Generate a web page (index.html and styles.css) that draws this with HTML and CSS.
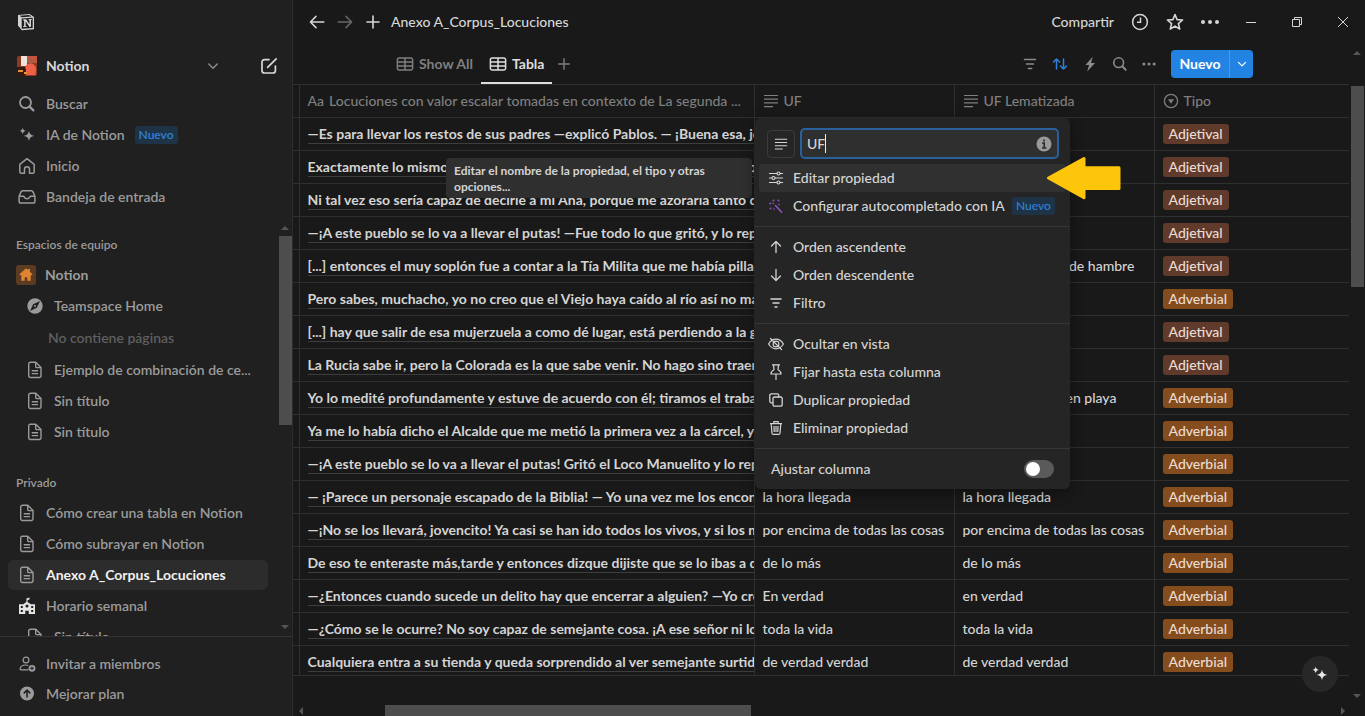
FILE: index.html
```html
<!DOCTYPE html>
<html lang="es">
<head>
<meta charset="utf-8">
<title>Anexo A_Corpus_Locuciones</title>
<link rel="stylesheet" href="styles.css">
</head>
<body>
<svg class="sprite" aria-hidden="true">
  <symbol id="i-search" viewBox="0 0 18 18"><g fill="none" stroke="currentColor" stroke-linecap="round"><circle cx="7.500" cy="7.500" r="5.500" stroke-width="1.800"/><path d="M11.600 11.600 15.400 15.400" stroke-width="2.200"/></g></symbol>
  <symbol id="i-sparkle" viewBox="0 0 18 18"><path fill="currentColor" d="M11 4.600c.6 3.400 1.900 4.700 5.200 5.300-3.300.6-4.600 1.900-5.200 5.300-.6-3.400-1.900-4.700-5.200-5.300 3.300-.6 4.600-1.900 5.200-5.300zM4.700 1.500c.4 2.200 1.100 3 3.300 3.400-2.200.4-2.900 1.100-3.300 3.300C4.300 6 3.600 5.300 1.400 4.900 3.600 4.500 4.300 3.700 4.700 1.500z"/></symbol>
  <symbol id="i-home" viewBox="0 0 18 18"><path fill="none" stroke="currentColor" stroke-width="1.500" stroke-linejoin="round" d="M1.800 7.300 9 1.700l7.200 5.600v7.400a1.500 1.500 0 0 1-1.500 1.500h-3.200v-4a2.500 2.500 0 0 0-5 0v4H3.300a1.500 1.500 0 0 1-1.500-1.500z"/></symbol>
  <symbol id="i-inbox" viewBox="0 0 18 18"><path fill="none" stroke="currentColor" stroke-width="1.500" stroke-linejoin="round" d="M1.100 8.300 3 3.900c.3-.7.900-1.100 1.700-1.100h8.600c.8 0 1.400.4 1.700 1.100l1.900 4.400v5a1.800 1.800 0 0 1-1.800 1.800H2.900a1.800 1.800 0 0 1-1.800-1.800zM1.100 8.300h4.200c.6 0 .8.4 1 .8.600 1.200 1.500 1.700 2.700 1.700s2.100-.5 2.700-1.700c.2-.4.400-.8 1-.8h4.200"/></symbol>
  <symbol id="i-page" viewBox="0 0 18 18"><path fill="none" stroke="currentColor" stroke-width="1.400" stroke-linejoin="round" d="M4.500 1.200h5.300l5.200 5.300v8.200a1.800 1.800 0 0 1-1.800 1.800H4.500a1.800 1.800 0 0 1-1.800-1.800V3A1.800 1.800 0 0 1 4.500 1.200zM9.700 1.400v4a1.200 1.200 0 0 0 1.200 1.200h3.900M5.700 9.800h6.400M5.700 12.600h6.400"/></symbol>
  <symbol id="i-table" viewBox="0 0 18 18"><path fill="none" stroke="currentColor" stroke-width="1.500" d="M3.200 3h11.600a1.800 1.800 0 0 1 1.800 1.800v8.400a1.800 1.800 0 0 1-1.800 1.800H3.200a1.800 1.800 0 0 1-1.800-1.800V4.800A1.800 1.800 0 0 1 3.200 3zM1.400 7h15.200M1.400 11h15.200M9 3v12"/></symbol>
  <symbol id="i-filter" viewBox="0 0 16 16"><path fill="none" stroke="currentColor" stroke-width="1.500" stroke-linecap="round" d="M2.500 3.500h11M4.500 8h7M6.300 12.500h3.400"/></symbol>
  <symbol id="i-lines" viewBox="0 0 16 16"><path fill="none" stroke="currentColor" stroke-width="1.200" d="M1 2.500h14M1 6.200h14M1 9.900h14M1 13.600h9"/></symbol>
  <symbol id="i-plus" viewBox="0 0 16 16"><path fill="none" stroke="currentColor" stroke-width="1.600" stroke-linecap="round" d="M8 2v12M2 8h12"/></symbol>
  <symbol id="i-arrow" viewBox="0 0 16 16"><path fill="none" stroke="currentColor" stroke-width="1.500" stroke-linecap="round" stroke-linejoin="round" d="M14.800 8H1.400M7 2.400 1.400 8 7 13.600"/></symbol>
  <symbol id="i-up" viewBox="0 0 16 16"><path fill="none" stroke="currentColor" stroke-width="1.300" stroke-linecap="round" stroke-linejoin="round" d="M8 13.500v-11M3.500 7 8 2.500 12.500 7"/></symbol>
  <symbol id="i-chevron" viewBox="0 0 12 12"><path fill="none" stroke="currentColor" stroke-width="1.500" stroke-linecap="round" stroke-linejoin="round" d="M1.800 4 6 8.200 10.200 4"/></symbol>
</svg>

<div class="app">
  <aside class="sidebar">
    <div class="brand">
      <svg class="logo" viewBox="0 0 18 18"><path fill="#d2d2d2" d="M1 2 12.500 1 17 4v12.200L4.800 17.200 1 12.600z"/><path fill="#202020" d="M2.600 2.700 12 2l2.600 1.600-9.800.7zM4.700 5.600l11-.8v10.200l-11 .8z"/><path fill="#e6e6e6" d="M6 6.500 9 6.300l3.500 5.300V7.200l-1-.2v-.7l3.300-.2v.7l-.9.3v6.700l-1.300.1-4-6v5l1.100.2v.7l-3.500.2v-.7l1-.3V7.400L6 7.200z"/></svg>
    </div>
    <div class="workspace">
      <button class="workspace-btn" type="button">
        <svg class="avatar" viewBox="0 0 20 20"><rect width="20" height="20" rx="2" fill="#8c3a22"/><path fill="#eee3dc" d="M4 0h6v10H4z"/><path fill="#c5543a" d="M10 0h10v7H10z"/><circle cx="13.500" cy="4.800" r="3" fill="#a85b45"/><path fill="#ef6048" d="M8 12c1-4 4-4.500 6-4.500s5 2 5 6l-.5 5.500H10z"/><path fill="#3a1710" d="M0 11h8l1 3-1 6H0z"/><path fill="#e3943b" d="M1 14h5v2H1zM7 16h3v2H7z"/></svg>
        <span class="workspace-name">Notion</span>
        <svg class="chev"><use href="#i-chevron"/></svg>
      </button>
      <button class="icon-btn" type="button" aria-label="Nueva página"><svg class="ic18" viewBox="0 0 18 18"><path fill="none" stroke="currentColor" stroke-width="1.700" stroke-linecap="round" d="M9 2.600H4.500a2.500 2.500 0 0 0-2.500 2.500v8.400A2.500 2.500 0 0 0 4.500 16h8.400a2.500 2.500 0 0 0 2.500-2.500V9M7.600 10.400l8.600-8.600"/></svg></button>
    </div>
    <nav class="side-nav">
      <a href="#" class="item"><svg class="ic18"><use href="#i-search"/></svg>Buscar</a>
      <a href="#" class="item"><svg class="ic18"><use href="#i-sparkle"/></svg>IA de Notion <span class="badge">Nuevo</span></a>
      <a href="#" class="item"><svg class="ic18"><use href="#i-home"/></svg>Inicio</a>
      <a href="#" class="item"><svg class="ic18"><use href="#i-inbox"/></svg>Bandeja de entrada</a>
    </nav>
    <div class="side-scroll">
      <div class="side-list">
        <h2 class="section">Espacios de equipo</h2>
        <a href="#" class="item team"><svg class="team-icon" viewBox="0 0 20 20"><rect width="20" height="20" rx="3" fill="#5c3b23"/><path fill="#e08434" d="M10 3.300 11.900 5V4h2v2.800L16.500 9.200l-.8 1.200-1-.6v6h-3.400v-3.600H8.700v3.600H5.300v-6l-1 .6-.8-1.200z"/></svg>Notion</a>
        <a href="#" class="item sub"><svg class="ic18" viewBox="0 0 18 18"><circle cx="9" cy="9" r="7.700" fill="currentColor"/><path fill="#202020" fill-rule="evenodd" d="m14 4-3.200 6.800L4 14l3.200-6.800zM9 8a1 1 0 1 0 0 2 1 1 0 0 0 0-2z"/></svg>Teamspace Home</a>
        <p class="empty">No contiene páginas</p>
        <a href="#" class="item sub"><svg class="ic18"><use href="#i-page"/></svg><span>Ejemplo de combinación de ce...</span></a>
        <a href="#" class="item sub"><svg class="ic18"><use href="#i-page"/></svg>Sin título</a>
        <a href="#" class="item sub"><svg class="ic18"><use href="#i-page"/></svg>Sin título</a>
        <h2 class="section private">Privado</h2>
        <a href="#" class="item"><svg class="ic18"><use href="#i-page"/></svg>Cómo crear una tabla en Notion</a>
        <a href="#" class="item"><svg class="ic18"><use href="#i-page"/></svg>Cómo subrayar en Notion</a>
        <a href="#" class="item active"><svg class="ic18"><use href="#i-page"/></svg>Anexo A_Corpus_Locuciones</a>
        <a href="#" class="item"><svg class="ic18 school" viewBox="0 0 18 18"><path fill="currentColor" fill-rule="evenodd" d="M8.400 1.500 11.500.5v2L9.500 3v2l3.300 2.300H17V17h-6.300v-3.300H7.300V17H1V7.300h4.200L8.400 5zM2.800 9v2h2V9zm0 4v2h2v-2zm10.400-4v2h2V9zm0 4v2h2v-2zM9 7.500A1.500 1.500 0 1 0 9 10.500 1.500 1.500 0 0 0 9 7.500z"/></svg>Horario semanal</a>
        <a href="#" class="item sub"><svg class="ic18"><use href="#i-page"/></svg>Sin título</a>
      </div>
      <div class="rail"><i class="tri up"></i><i class="thumb side-thumb"></i><i class="tri down"></i></div>
    </div>
    <div class="side-foot">
      <a href="#" class="item"><svg class="ic18" viewBox="0 0 18 18"><g fill="none" stroke="currentColor" stroke-width="1.200"><circle cx="8" cy="5" r="2.900"/><path d="M10.500 14.800H3c-.8 0-1.100-.5-.9-1.200C2.700 11.500 4.500 10 7.500 10c1 0 2 .2 2.800.5"/></g><circle cx="14" cy="13.300" r="3.400" fill="currentColor"/><path stroke="#202020" d="M14 11.500v3.600M12.200 13.300h3.600"/></svg>Invitar a miembros</a>
      <a href="#" class="item"><svg class="ic18" viewBox="0 0 18 18"><circle cx="9" cy="8.500" r="7" fill="currentColor"/><path fill="none" stroke="#202020" stroke-width="1.500" stroke-linecap="round" stroke-linejoin="round" d="M9 12V5.300M6.200 7.900 9 5.100l2.800 2.800"/></svg>Mejorar plan</a>
    </div>
  </aside>

  <main class="main">
    <header class="topbar">
      <button class="icon-btn" type="button" aria-label="Atrás"><svg class="ic16"><use href="#i-arrow"/></svg></button>
      <button class="icon-btn dim" type="button" aria-label="Adelante"><svg class="ic16 flip"><use href="#i-arrow"/></svg></button>
      <button class="icon-btn" type="button" aria-label="Nueva pestaña"><svg class="ic16"><use href="#i-plus"/></svg></button>
      <h1 class="page-title">Anexo A_Corpus_Locuciones</h1>
      <button class="share" type="button">Compartir</button>
      <button class="icon-btn" type="button" aria-label="Actualizaciones"><svg class="ic18" viewBox="0 0 18 18"><g fill="none" stroke="currentColor" stroke-width="1.500"><circle cx="9" cy="9" r="7.400"/><path d="M9.500 4.500V9.300H6"/></g></svg></button>
      <button class="icon-btn" type="button" aria-label="Favorito"><svg class="ic18" viewBox="0 0 18 18"><path fill="none" stroke="currentColor" stroke-width="1.600" stroke-linejoin="round" d="m9 1.500 2.100 5.100 5.500.4-4.200 3.600 1.300 5.400L9 13.100 4.300 16l1.300-5.400L1.400 7l5.500-.4z"/></svg></button>
      <button class="icon-btn" type="button" aria-label="Más"><svg class="ic18" viewBox="0 0 18 18"><g fill="currentColor"><circle cx="2" cy="9" r="2"/><circle cx="9" cy="9" r="2"/><circle cx="16" cy="9" r="2"/></g></svg></button>
      <div class="window-ctl">
        <button class="icon-btn" type="button" aria-label="Minimizar"><svg class="ic12" viewBox="0 0 12 12"><path stroke="currentColor" d="M1 6.500h10"/></svg></button>
        <button class="icon-btn" type="button" aria-label="Restaurar"><svg class="ic12" viewBox="0 0 12 12"><path fill="none" stroke="currentColor" d="M1.500 3.500h7v7h-7zM3.500 3V1.500h7v7H9"/></svg></button>
        <button class="icon-btn" type="button" aria-label="Cerrar"><svg class="ic12" viewBox="0 0 12 12"><path stroke="currentColor" d="m1 1 10 10M11 1 1 11"/></svg></button>
      </div>
    </header>

    <div class="body">
      <div class="view">
        <div class="tabs">
          <button class="tab" type="button"><svg class="ic18"><use href="#i-table"/></svg>Show All</button>
          <button class="tab current" type="button"><svg class="ic18"><use href="#i-table"/></svg>Tabla</button>
          <button class="icon-btn add-view" type="button" aria-label="Añadir vista"><svg class="ic14"><use href="#i-plus"/></svg></button>
          <div class="tools">
            <button class="icon-btn" type="button" aria-label="Filtrar"><svg class="ic16"><use href="#i-filter"/></svg></button>
            <button class="icon-btn blue" type="button" aria-label="Ordenar"><svg class="ic16" viewBox="0 0 16 16"><path fill="none" stroke="currentColor" stroke-width="1.500" stroke-linecap="round" stroke-linejoin="round" d="M4.500 13V3M1.500 6l3-3 3 3M11.500 3v10M8.500 10l3 3 3-3"/></svg></button>
            <button class="icon-btn" type="button" aria-label="Automatizaciones"><svg class="ic16" viewBox="0 0 16 16"><path fill="currentColor" d="M10.800.8 3.400 9h3.700l-1.900 6.400L13 7H9z"/></svg></button>
            <button class="icon-btn" type="button" aria-label="Buscar"><svg class="ic16"><use href="#i-search"/></svg></button>
            <button class="icon-btn" type="button" aria-label="Opciones"><svg class="ic14" viewBox="0 0 14 14"><g fill="currentColor"><circle cx="1.900" cy="7" r="1.500"/><circle cx="7" cy="7" r="1.500"/><circle cx="12.100" cy="7" r="1.500"/></g></svg></button>
          </div>
          <div class="new">
            <button class="new-main" type="button">Nuevo</button>
            <button class="new-more" type="button" aria-label="Plantillas"><svg class="ic10"><use href="#i-chevron"/></svg></button>
          </div>
        </div>
        <div class="table-wrap">
          <table class="grid">
            <colgroup><col class="c-gutter"><col class="c-title"><col class="c-text"><col class="c-text"><col></colgroup>
            <thead><tr>
              <td></td>
              <th><div class="th"><span>Aa</span><span class="ellipsis">Locuciones con valor escalar tomadas en contexto de La segunda ...</span></div></th>
              <th><div class="th"><svg class="ic16"><use href="#i-lines"/></svg>UF</div></th>
              <th><div class="th"><svg class="ic16"><use href="#i-lines"/></svg>UF Lematizada</div></th>
              <th><div class="th"><svg class="ic16" viewBox="0 0 16 16"><circle cx="8" cy="8" r="6.600" fill="none" stroke="currentColor" stroke-width="1.300"/><path fill="currentColor" d="M5 6.300h6L8 10.800z"/></svg>Tipo</div></th>
            </tr></thead>
            <tbody>
              <tr><td></td><td><span class="name">—Es para llevar los restos de sus padres —explicó Pablos. — ¡Buena esa, jovencito!</span></td><td></td><td></td><td><span class="tag adj">Adjetival</span></td></tr>
              <tr><td></td><td><span class="name">Exactamente lo mismo que había pasado la otra noche con aquel señor que vino</span></td><td></td><td></td><td><span class="tag adj">Adjetival</span></td></tr>
              <tr><td></td><td><span class="name">Ni tal vez eso sería capaz de decirle a mi Ana, porque me azoraría tanto que no</span></td><td></td><td></td><td><span class="tag adj">Adjetival</span></td></tr>
              <tr><td></td><td><span class="name">—¡A este pueblo se lo va a llevar el putas! —Fue todo lo que gritó, y lo repitió</span></td><td></td><td></td><td><span class="tag adj">Adjetival</span></td></tr>
              <tr><td></td><td><span class="name">[...] entonces el muy soplón fue a contar a la Tía Milita que me había pillado ahí</span></td><td></td><td>estaba muriendo de hambre</td><td><span class="tag adj">Adjetival</span></td></tr>
              <tr><td></td><td><span class="name">Pero sabes, muchacho, yo no creo que el Viejo haya caído al río así no más, no</span></td><td></td><td></td><td><span class="tag adv">Adverbial</span></td></tr>
              <tr><td></td><td><span class="name">[...] hay que salir de esa mujerzuela a como dé lugar, está perdiendo a la gente</span></td><td></td><td></td><td><span class="tag adj">Adjetival</span></td></tr>
              <tr><td></td><td><span class="name">La Rucia sabe ir, pero la Colorada es la que sabe venir. No hago sino traerlas</span></td><td></td><td></td><td><span class="tag adj">Adjetival</span></td></tr>
              <tr><td></td><td><span class="name">Yo lo medité profundamente y estuve de acuerdo con él; tiramos el trabajo al</span></td><td></td><td>anduve de playa en playa</td><td><span class="tag adv">Adverbial</span></td></tr>
              <tr><td></td><td><span class="name">Ya me lo había dicho el Alcalde que me metió la primera vez a la cárcel, y yo</span></td><td></td><td></td><td><span class="tag adv">Adverbial</span></td></tr>
              <tr><td></td><td><span class="name">—¡A este pueblo se lo va a llevar el putas! Gritó el Loco Manuelito y lo repitió</span></td><td></td><td></td><td><span class="tag adv">Adverbial</span></td></tr>
              <tr><td></td><td><span class="name">— ¡Parece un personaje escapado de la Biblia! — Yo una vez me los encontré</span></td><td>la hora llegada</td><td>la hora llegada</td><td><span class="tag adv">Adverbial</span></td></tr>
              <tr><td></td><td><span class="name">—¡No se los llevará, jovencito! Ya casi se han ido todos los vivos, y si los muertos</span></td><td>por encima de todas las cosas</td><td>por encima de todas las cosas</td><td><span class="tag adv">Adverbial</span></td></tr>
              <tr><td></td><td><span class="name">De eso te enteraste más,tarde y entonces dizque dijiste que se lo ibas a decir</span></td><td>de lo más</td><td>de lo más</td><td><span class="tag adv">Adverbial</span></td></tr>
              <tr><td></td><td><span class="name">—¿Entonces cuando sucede un delito hay que encerrar a alguien? —Yo creo</span></td><td>En verdad</td><td>en verdad</td><td><span class="tag adv">Adverbial</span></td></tr>
              <tr><td></td><td><span class="name">—¿Cómo se le ocurre? No soy capaz de semejante cosa. ¡A ese señor ni lo</span></td><td>toda la vida</td><td>toda la vida</td><td><span class="tag adv">Adverbial</span></td></tr>
              <tr><td></td><td><span class="name">Cualquiera entra a su tienda y queda sorprendido al ver semejante surtido</span></td><td>de verdad verdad</td><td>de verdad verdad</td><td><span class="tag adv">Adverbial</span></td></tr>
            </tbody>
          </table>
        </div>
      </div>
      <div class="rail"><i class="tri up"></i><i class="thumb main-thumb"></i><i class="tri down"></i></div>
    </div>
    <div class="hrail"><i class="tri left"></i><i class="hthumb"></i><i class="tri right"></i></div>

    <div class="tooltip" role="tooltip">Editar el nombre de la propiedad, el tipo y otras opciones...</div>

    <section class="menu" aria-label="Propiedad UF">
      <div class="menu-name">
        <button class="type-btn" type="button" aria-label="Tipo de propiedad"><svg class="ic14"><use href="#i-lines"/></svg></button>
        <label class="field">
          <input type="text" value="UF" aria-label="Nombre de la propiedad">
          <i class="caret"></i>
          <svg class="ic16" viewBox="0 0 16 16"><circle cx="8" cy="8" r="7.500" fill="#9a9a9a"/><path stroke="#2b2b2b" stroke-width="1.700" fill="none" d="M6.300 7.200H8.200V12M6 12h4.400M8 3.500v2"/></svg>
        </label>
      </div>
      <div class="group first">
        <button class="opt hover" type="button"><svg class="ic16" viewBox="0 0 16 16"><g fill="none" stroke="currentColor" stroke-width="1.200"><path d="M1 3.500h8M12 3.500h3M1 8h3M7 8h8M1 12.500h8M12 12.500h3"/><circle cx="10.500" cy="3.500" r="1.500"/><circle cx="5.500" cy="8" r="1.500"/><circle cx="10.500" cy="12.500" r="1.500"/></g></svg>Editar propiedad</button>
        <button class="opt" type="button"><svg class="ic16 purple" viewBox="0 0 16 16"><path fill="none" stroke="currentColor" stroke-width="1.600" stroke-linecap="round" d="M7.500 7.500l6.200 6.700"/><g fill="currentColor"><circle cx="5.500" cy="2.500" r="1"/><circle cx="10.500" cy="2.500" r="1"/><circle cx="2.200" cy="5.500" r="1"/><circle cx="5.200" cy="5.400" r=".8"/><circle cx="2.500" cy="10.500" r="1"/><circle cx="6" cy="11" r=".8"/><circle cx="11" cy="6.500" r=".8"/></g></svg>Configurar autocompletado con IA <span class="badge">Nuevo</span></button>
      </div>
      <div class="group">
        <button class="opt" type="button"><svg class="ic16"><use href="#i-up"/></svg>Orden ascendente</button>
        <button class="opt" type="button"><svg class="ic16 flip"><use href="#i-up"/></svg>Orden descendente</button>
        <button class="opt" type="button"><svg class="ic16" viewBox="0 0 16 16"><path fill="none" stroke="currentColor" stroke-width="1.300" d="M2.500 4h11M4.500 8h7M6.500 12h3"/></svg>Filtro</button>
      </div>
      <div class="group">
        <button class="opt" type="button"><svg class="ic16" viewBox="0 0 16 16"><g fill="none" stroke="currentColor" stroke-width="1.200" stroke-linecap="round"><path d="M.6 8C2.500 4.800 5 3.200 8 3.200s5.500 1.600 7.400 4.800C13.500 11.200 11 12.800 8 12.800S2.500 11.200.6 8z"/><circle cx="8" cy="8" r="2.900"/><path d="m2.500 2.500 11 11"/></g></svg>Ocultar en vista</button>
        <button class="opt" type="button"><svg class="ic16" viewBox="0 0 16 16"><path fill="none" stroke="currentColor" stroke-width="1.200" stroke-linejoin="round" d="M4 .9h8M5.500.9 6 5.800C4 6.800 3 8.200 2.900 10h10.200C13 8.200 12 6.800 10 5.800l.5-4.900M8 10v6"/></svg>Fijar hasta esta columna</button>
        <button class="opt" type="button"><svg class="ic16" viewBox="0 0 16 16"><path fill="none" stroke="currentColor" stroke-width="1.300" stroke-linejoin="round" d="M6.500 5h6.200a1.500 1.500 0 0 1 1.500 1.500v6.200a1.500 1.500 0 0 1-1.500 1.500H6.500A1.500 1.500 0 0 1 5 12.700V6.500A1.500 1.500 0 0 1 6.500 5zM5 10.800H3.300a1.500 1.500 0 0 1-1.500-1.500V3.300a1.500 1.500 0 0 1 1.500-1.500h6a1.500 1.500 0 0 1 1.500 1.500V5"/></svg>Duplicar propiedad</button>
        <button class="opt" type="button"><svg class="ic16" viewBox="0 0 16 16"><path fill="none" stroke="currentColor" stroke-width="1.200" stroke-linejoin="round" d="M2 3.700h12M5.800 3.500V1.600h4.400v1.900M3.200 3.900l.8 9.400c.1.800.5 1.100 1.200 1.100h5.600c.7 0 1.100-.3 1.200-1.100l.8-9.400M6 6l.2 6M8 6v6M10 6l-.2 6"/></svg>Eliminar propiedad</button>
      </div>
      <div class="group">
        <label class="wrap-row">Ajustar columna<input class="switch" type="checkbox" role="switch"></label>
      </div>
    </section>

    <svg class="pointer" viewBox="0 0 76 44" aria-hidden="true"><path fill="#fdc60b" stroke="#fdc60b" stroke-width="3" stroke-linejoin="round" d="M2.500 22 38 2.500v9.200h35v20.800H38v9.200z"/></svg>
    <button class="ai-fab" type="button" aria-label="IA de Notion"><svg class="ic18"><use href="#i-sparkle"/></svg></button>
  </main>
</div>
</body>
</html>
```
FILE: styles.css
```css
* { box-sizing: border-box; }
body {
  margin: 0;
  background: #191919;
  color: #d4d4d4;
  font: 500 14px/20px Lato, "Liberation Sans", sans-serif;
  overflow: hidden;
}
button, input { font: inherit; color: inherit; }
button { border: 0; padding: 0; background: none; }
a { color: inherit; text-decoration: none; }
h1, h2, p { margin: 0; font-size: inherit; font-weight: inherit; }
svg { display: block; flex: none; }
.sprite { position: absolute; width: 0; height: 0; }
.ic18 { width: 18px; height: 18px; }
.ic16 { width: 16px; height: 16px; }
.ic14 { width: 14px; height: 14px; }
.ic12 { width: 12px; height: 12px; }
.ic10 { width: 10px; height: 10px; }
.flip { transform: rotate(180deg); }
.ellipsis { min-width: 0; overflow: hidden; text-overflow: ellipsis; white-space: nowrap; }
.icon-btn { display: flex; align-items: center; justify-content: center; }

.app { display: flex; height: 100vh; }

/* Sidebar */
.sidebar {
  flex: none;
  display: flex;
  flex-direction: column;
  width: 293px;
  background: #202020;
  border-right: 1px solid #2c2c2c;
  color: #9b9b9b;
  font-weight: 600;
}
.brand { display: flex; align-items: center; height: 44px; padding-left: 17px; }
.logo { width: 18px; height: 18px; }
.workspace { display: flex; align-items: center; gap: 41px; height: 44px; padding: 0 14px 0 17px; color: #d8d8d8; }
.workspace-btn { flex: 1; display: flex; align-items: center; gap: 9px; text-align: left; font-weight: 700; }
.workspace-name { flex: 1; }
.avatar { width: 20px; height: 20px; }
.chev { width: 12px; height: 12px; color: #8a8a8a; }
.side-nav { display: grid; gap: 1px; padding: 1px 0; }
.item {
  display: flex;
  align-items: center;
  gap: 10px;
  height: 30px;
  margin: 0 24px 0 8px;
  padding: 0 10px;
  border-radius: 6px;
  white-space: nowrap;
}
.item.sub { padding-left: 18px; }
.item.team { height: 31px; padding-left: 8px; gap: 9px; font-weight: 700; }
.item.active { background: #2c2c2c; color: #f1f1f1; font-weight: 700; }
.item.active svg { color: #9b9b9b; }
.school { color: #e4e4e4; }
.team-icon { width: 20px; height: 20px; }
.badge {
  height: 18px;
  padding: 0 4px;
  border-radius: 3px;
  background: #1f3347;
  color: #2f81d8;
  font-size: 12px;
  line-height: 18px;
}
.side-scroll { flex: 1; min-height: 0; display: flex; margin-top: 9px; border-bottom: 1px solid #333; }
.side-list { flex: 1; min-width: 0; display: flex; flex-direction: column; gap: 1px; overflow: hidden; padding-top: 10px; }
.side-list .item { flex: none; margin-right: 10px; }
.section { flex: none; height: 26px; padding: 3px 16px; font-size: 12px; }
.private { margin: 22px 0 1px; }
.empty { flex: none; height: 32px; padding: 6px 0 0 48px; color: #5f5f5f; }
.side-foot { padding: 12px 0 7px; }

/* Scroll rails */
.rail { flex: none; display: flex; flex-direction: column; align-items: center; width: 14px; }
.tri { width: 0; height: 0; border: 4px solid transparent; }
.tri.up { border-bottom-color: #555; border-top: 0; }
.tri.down { border-top-color: #555; border-bottom: 0; margin-top: auto; }
.tri.left { border-right-color: #555; border-left: 0; }
.tri.right { border-left-color: #555; border-right: 0; margin-left: auto; }
.thumb { width: 13px; background: #4d4d4d; }
.side-scroll .rail { padding: 4px 0 7px; }
.side-thumb { height: 47%; margin-top: 6px; }
.body .rail { width: 16px; padding: 7px 0; }
.main-thumb { height: 31%; margin-top: 31px; }
.hrail { flex: none; display: flex; align-items: center; height: 11px; padding: 0 20px 0 6px; }
.hthumb { width: 35%; height: 11px; margin-left: 82px; background: #4d4d4d; }

/* Main */
.main { position: relative; flex: 1; min-width: 0; display: flex; flex-direction: column; }
.topbar { flex: none; display: flex; align-items: center; gap: 12px; height: 44px; padding: 0 16px; color: #d6d6d6; }
.dim { color: #686868; }
.page-title { flex: 1; margin-left: -2px; }
.topbar > .icon-btn:nth-of-type(n+5) { margin-left: 5px; }
.window-ctl { display: flex; gap: 34px; margin-left: 14px; }
.body { flex: 1; min-height: 0; display: flex; }
.view { flex: 1; min-width: 0; display: flex; flex-direction: column; }

.tabs { flex: none; display: flex; align-items: center; height: 40px; padding: 0 96px 0 95px; font-weight: 700; }
.tab { display: flex; align-items: center; gap: 5px; height: 40px; padding: 2px 8px 0; color: #7f7f7f; border-bottom: 2px solid transparent; }
.tab.current { color: #dedede; border-color: #dedede; }
.add-view { margin-left: 5px; color: #7f7f7f; }
.tools { display: flex; align-items: center; gap: 14px; margin-left: auto; color: #8a8a8a; }
.blue { color: #2f81d8; }
.new { display: flex; height: 28px; margin-left: 15px; border-radius: 4px; background: #2383e2; color: #fff; overflow: hidden; }
.new-main { width: 58px; }
.new-more { display: flex; align-items: center; justify-content: center; width: 24px; border-left: 1px solid #4a9aea; }

.table-wrap { flex: none; }
.grid { width: 100%; table-layout: fixed; border-collapse: collapse; border-top: 1px solid #2f2f2f; }
.c-gutter { width: 6px; }
.c-title { width: 455px; }
.c-text { width: 200px; }
.grid tr { height: 33px; border-bottom: 1px solid #2f2f2f; }
.grid tbody tr:last-child { height: 30px; }
.grid tbody tr:last-child td { padding-top: 3px; }
.grid td, .grid th { padding: 0 0 0 8px; border-left: 1px solid #2f2f2f; overflow: hidden; white-space: nowrap; text-align: left; font-weight: 500; }
.grid td:first-child { border-left: 0; padding: 0; }
.th { display: flex; align-items: center; gap: 5px; padding-right: 4px; color: #7f7f7f; }
.name { display: block; border-bottom: 1px solid #3d3d3d; line-height: 18px; font-weight: 700; }
.tag { display: block; width: fit-content; height: 20px; padding: 0 6px; border-radius: 3px; color: #ecdcd2; }
.adj { background: #603b2c; }
.adv { background: #854c1d; }

/* Overlays */
.tooltip {
  position: absolute;
  left: 153px;
  top: 158px;
  width: 306px;
  padding: 5px 8px 3px;
  border-radius: 4px;
  background: #2f2f2f;
  font-size: 12px;
  font-weight: 700;
  line-height: 16px;
}
.menu {
  position: absolute;
  left: 462px;
  top: 118px;
  width: 315px;
  border-radius: 6px;
  background: #252525;
  box-shadow: 0 4px 14px rgba(0, 0, 0, .4);
}
.menu-name { display: flex; align-items: center; gap: 5px; padding: 10px 11px 5px 12px; }
.type-btn { display: flex; align-items: center; justify-content: center; width: 28px; height: 28px; border: 1px solid #3b3b3b; border-radius: 4px; }
.field { position: relative; flex: 1; display: flex; align-items: center; height: 31px; padding: 0 5px; border: 2px solid #28619d; border-radius: 5px; background: #2f2f2f; }
.field input { flex: 1; min-width: 0; padding: 0; border: 0; outline: 0; background: none; }
.caret { position: absolute; left: 23px; top: 4px; width: 1px; height: 19px; background: #eee; }
.group { padding: 6px 4px; border-top: 1px solid #363636; }
.group.first { padding-top: 0; border-top: 0; }
.opt { display: flex; align-items: center; gap: 9px; width: 100%; height: 28px; padding: 0 9px; border-radius: 4px; white-space: nowrap; }
.opt.hover { background: #303030; }
.opt .badge { margin-left: -2px; }
.purple { color: #8b55c4; }
.wrap-row { display: flex; align-items: center; justify-content: space-between; height: 28px; padding: 0 12px; }
.switch { appearance: none; width: 30px; height: 18px; margin: 0; padding: 2px; border-radius: 9px; background: #5a5a5a; }
.switch::before { content: ""; display: block; width: 14px; height: 14px; border-radius: 50%; background: #fff; }
.pointer { position: absolute; left: 753px; top: 156px; width: 76px; height: 44px; }
.ai-fab { position: absolute; right: 27px; bottom: 24px; display: flex; align-items: center; justify-content: center; width: 36px; height: 36px; border-radius: 50%; background: #272727; color: #e8e8e8; }
```
